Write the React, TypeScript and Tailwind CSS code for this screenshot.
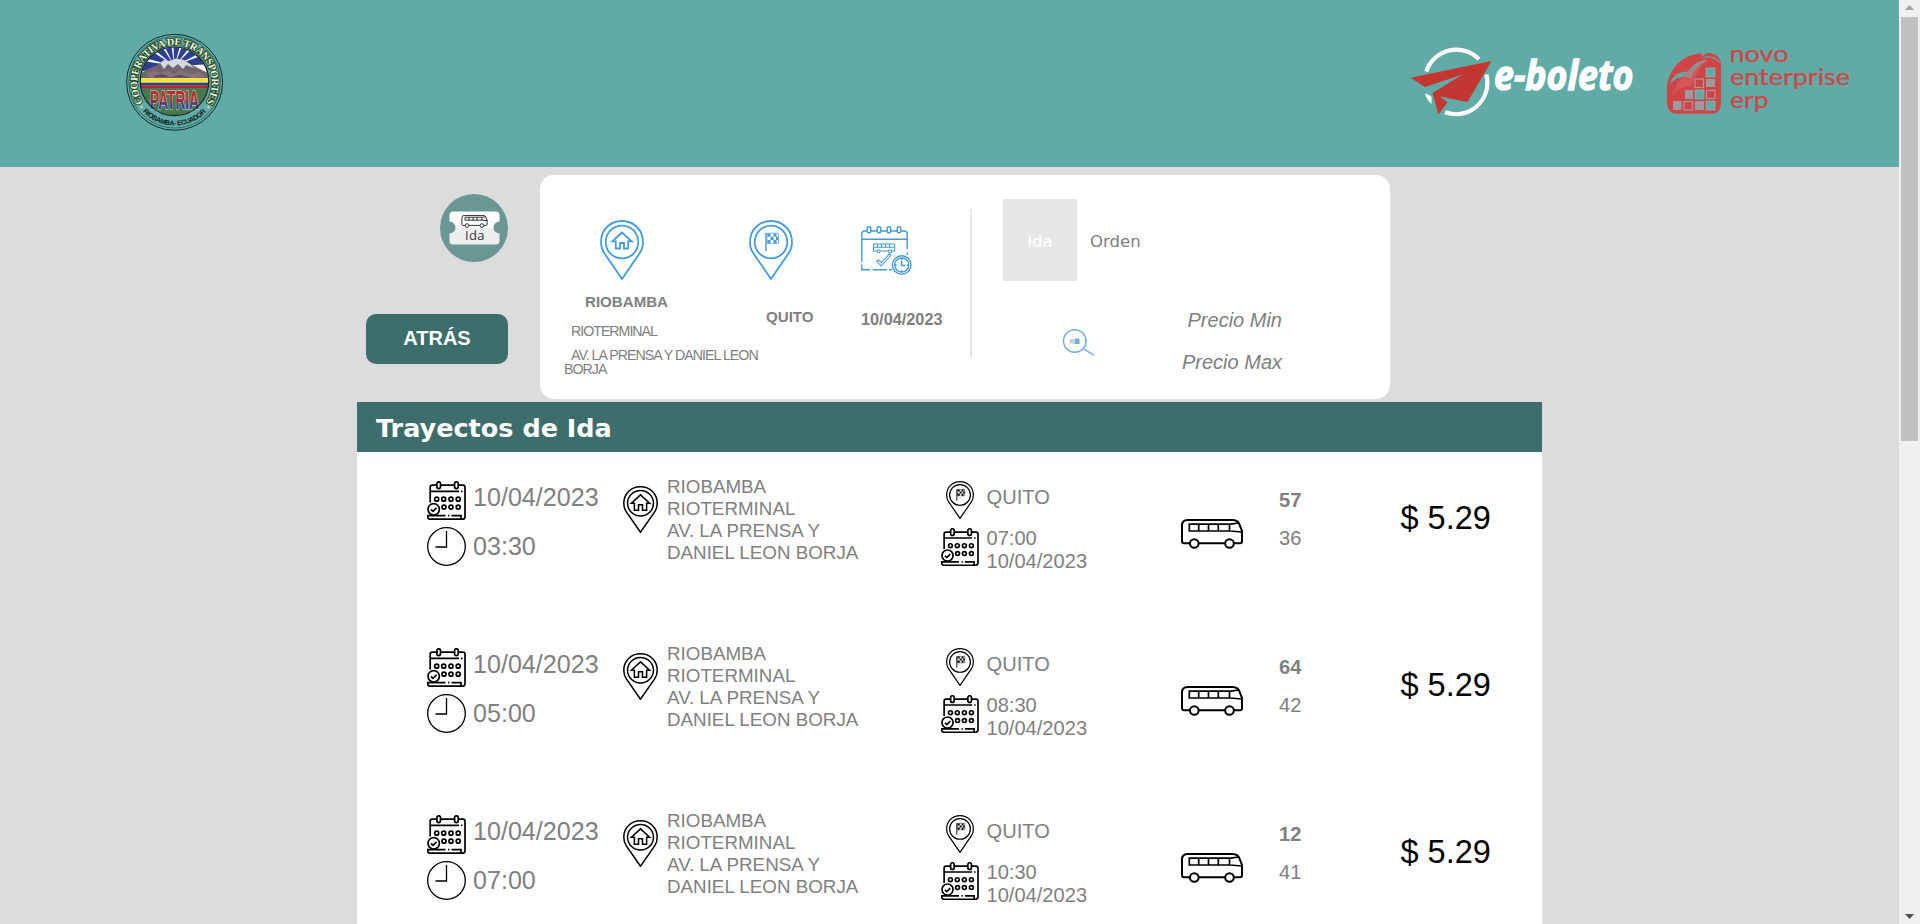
import React from "react";

const GREY = "text-[#808080]";

function PinIcon({ kind, className, sw }: { kind: "home" | "bighome" | "flag"; className: string; sw: number }) {
  return (
    <svg viewBox="0 0 44 60" className={className} fill="none" stroke="currentColor" strokeWidth={sw} preserveAspectRatio="none">
      <path d="M22 59 L4.2 33 C1.8 29.500 1 26 1 22 C1 10 10 1 22 1 C34 1 43 10 43 22 C43 26 42.200 29.500 39.800 33 Z" />
      <circle cx="22" cy="22" r="16.300" />
      {kind === "home" && (
        <path d="M22 12.500 L12.300 21.300 H15.800 V28.500 H20 V23 H24 V28.500 H28.200 V21.300 H31.700 Z" />
      )}
      {kind === "bighome" && (
        <path d="M22 11.300 L10.500 22 H14.300 V31 H19.500 V24 H24.500 V31 H29.700 V22 H33.500 Z" />
      )}
      {kind === "flag" && (
        <g stroke="none" fill="currentColor">
          <rect x="16.300" y="13" width="1.400" height="18" />
          <path d="M18.500 13.500h3v3.200h-3z M24.500 13.500h3v3.200h-3z M21.500 16.700h3v3.200h-3z M27 16.700h2.500v3.200H27z M18.500 19.900h3v3.200h-3z M24.500 19.900h3v3.200h-3z" />
          <path d="M18 13.200h11.500v10.200H18z" fill="none" stroke="currentColor" strokeWidth="0.700" />
        </g>
      )}
    </svg>
  );
}

function CalendarIcon({ className }: { className: string }) {
  return (
    <svg viewBox="0 0 39 39" className={className} fill="none" stroke="#000" strokeWidth="1.700" preserveAspectRatio="none">
      <path d="M3.200 21.500 V6 Q3.200 4.200 5.200 4.200 H9.800 M13.600 4.200 H27.500 M31.400 4.200 H35.800 Q38 4.200 38 6.400 V35.500 Q38 38.200 35.500 38.200 H3 Q.8 38.200 .8 36 V34.700 H18.500 M24.500 34.700 H34 V38" />
      <rect x="9.900" y=".8" width="3.600" height="6.800" rx="1.800" />
      <rect x="27.600" y=".8" width="3.600" height="6.800" rx="1.800" />
      <path d="M3.200 10.300 H32 M34 10.300 H35.500 M21 34.700 H22.300" />
      <circle cx="9.700" cy="18.200" r="2" />
      <circle cx="16.700" cy="18.200" r="2" />
      <circle cx="24" cy="18.200" r="2" />
      <circle cx="31.200" cy="18.200" r="2" />
      <circle cx="17" cy="26.200" r="2" />
      <circle cx="24" cy="26.200" r="2" />
      <circle cx="31.200" cy="26.200" r="2" />
      <circle cx="6.700" cy="28.300" r="5.700" />
      <path d="M4 28.500 L6 30.300 L9.500 26.800" />
    </svg>
  );
}

function ClockIcon({ className }: { className: string }) {
  return (
    <svg viewBox="0 0 39 39" className={className} fill="none" stroke="#000" strokeWidth="1.300">
      <circle cx="19.500" cy="19.500" r="18.800" />
      <path d="M19.500 4 V20 H8.500" />
    </svg>
  );
}

function BusIcon({ className, sw }: { className: string; sw: number }) {
  return (
    <svg viewBox="0 0 62 30" className={className} fill="none" stroke="#000" strokeWidth={sw} preserveAspectRatio="none">
      <path d="M9 24.200 H3 Q1 24.200 1 22 V6.500 Q1 1 6.500 1 H51 Q56.500 1 58 4.500 L61 12 V22.500 Q61 24.200 59 24.200 H53 M17.600 24.200 H44" />
      <path d="M57.500 4 L50 5.200 H8.300 V12 H49 L61 13 M17.700 5.200 V12 M27.500 5.200 V12 M37.300 5.200 V12 M48.500 5.200 V12" strokeWidth={sw * 0.85} />
      <circle cx="13.300" cy="24.500" r="4.300" />
      <circle cx="48.500" cy="24.500" r="4.300" />
    </svg>
  );
}

function TripCalendarIcon() {
  return (
    <svg viewBox="0 0 51 50" className="h-[50px] w-[51px]" fill="none" stroke="#459bd8" strokeWidth="1.400">
      <path d="M.8 36 V8 Q.8 5 4 5 H6 M10 5 H16 M20 5 H26 M30 5 H36 M40 5 H43 Q46.200 5 46.200 8 V23 M46.200 26.500 V29 M.8 38.500 V43.800 H9 M11.500 43.800 H26 M28 43.800 H31 M.8 13.300 H46" />
      <rect x="6.300" y=".7" width="3.500" height="6" rx="1.300" />
      <rect x="16.200" y=".7" width="3.500" height="6" rx="1.300" />
      <rect x="26.200" y=".7" width="3.500" height="6" rx="1.300" />
      <rect x="36.300" y=".7" width="3.500" height="6" rx="1.300" />
      <g strokeWidth="1.050">
        <path d="M12.500 18 H33.700 V25 H12.500 Z M12.500 21.300 H33.700 M16.500 18 V21.300 M20.500 18 V21.300 M24.500 18 V21.300 M28.500 18 V21.300" />
        <circle cx="17.500" cy="25.300" r="1.500" fill="#fff" />
        <circle cx="29" cy="25.300" r="1.500" fill="#fff" />
        <path d="M15.500 35.500 L17.500 34 L20.300 36.500 L28.500 27.800 L30 29.300 L20.300 39.800 Z" />
      </g>
      <circle cx="40.700" cy="39" r="9.300" fill="#fff" />
      <circle cx="40.700" cy="39" r="7" />
      <path d="M40.700 35 V39.500 H44 M40.700 32 V33.800 M40.700 44.200 V46 M33.700 39 H35.500 M46 39 H47.700" />
    </svg>
  );
}

function CoopEmblem() {
  const rays = [-90, -66, -42, -18, 6, 30, 54, 78];
  return (
    <svg viewBox="15 13 99 99" className="h-[99px] w-[99px] overflow-visible">
      <defs>
        <clipPath id="disc"><circle cx="64.500" cy="61.300" r="34" /></clipPath>
        <path id="arcTop" d="M33.100 82.500 A37.300 37.300 0 1 1 96.100 82.500" />
        <path id="arcBottom" d="M32.100 90.800 A43.200 43.200 0 0 0 97.100 90.800" />
        <linearGradient id="patria" x1="0" y1="0" x2="0" y2="1">
          <stop offset="0.450" stopColor="#c3262b" />
          <stop offset="0.750" stopColor="#27409a" />
        </linearGradient>
      </defs>
      <circle cx="64.600" cy="62.300" r="48" fill="none" stroke="#0d2a2a" strokeWidth="1" />
      <circle cx="64.600" cy="62.300" r="45.800" fill="none" stroke="#0d2a2a" strokeWidth=".5" />
      <g clipPath="url(#disc)">
        <rect x="30" y="26" width="70" height="72" fill="#f4f6fa" />
        {rays.map((a) => (
          <path key={a} d="M64.500 46 L57.500 2 H71.500 Z" fill="#2c3f92" transform={`rotate(${a} 64.500 46)`} />
        ))}
        <path d="M28 55 L38 49 L47 45 L54 40 L59 41 L66 38.500 L74 40 L82 45 L90 49 L100 54 V60 H28 Z" fill="#6f666e" />
        <path d="M50 43 L54 40 L59 41 L66 38.500 L74 40 L80 44 L84 48 L76 45 L73 49 L68 44 L63 48 L58 44 L54 49 Z" fill="#d6d7df" />
        <path d="M36 53 L45 50 L50 53 L57 50 L64 54 L71 50 L80 54 L90 52 L96 57 L84 58 H40 Z" fill="#857177" />
        <path d="M44 56 L52 54 L60 57 L70 55 L82 57.500 H44 Z" fill="#5a4e58" />
        <rect x="28" y="58" width="74" height="4.700" fill="#f4e33c" />
        <rect x="28" y="62.700" width="74" height="3" fill="#2c3f80" />
        <rect x="28" y="65.700" width="74" height="2.300" fill="#b8252b" />
        <rect x="28" y="68" width="74" height="30" fill="#47794d" />
      </g>
      <text transform="translate(64.500 88.500) scale(1 1.200)" textAnchor="middle" textLength="49" lengthAdjust="spacingAndGlyphs" fontSize="21" fontWeight="700" fontFamily="Liberation Sans, sans-serif" fill="url(#patria)" stroke="#e9dfe4" strokeWidth="1" paintOrder="stroke">PATRIA</text>
      <circle cx="64.500" cy="61.300" r="34.300" fill="none" stroke="#15201f" strokeWidth="1.200" />
      <text fontSize="10.200" fontWeight="700" fontFamily="Liberation Serif, serif" fill="#f4f7e6" stroke="#234a22" strokeWidth="2" paintOrder="stroke">
        <textPath href="#arcTop" textLength="159">COOPERATIVA DE TRANSPORTES</textPath>
      </text>
      <text fontSize="7" fontWeight="700" fontFamily="Liberation Sans, sans-serif" fill="#0a1f1f">
        <textPath href="#arcBottom" startOffset="1" textLength="71">RIOBAMBA- ECUADOR</textPath>
      </text>
      <circle cx="31.500" cy="87" r="1.400" fill="#c8d0b0" />
      <circle cx="98.500" cy="87" r="1.400" fill="#c8d0b0" />
    </svg>
  );
}

function BoletoLogo() {
  return (
    <svg viewBox="0 0 226 72" className="h-[72px] w-[226px] overflow-visible">
      <g fill="none" stroke="#fff" strokeWidth="4.200">
        <path d="M16.300 23.500 A31.500 31.500 0 0 1 69 11.300" />
        <path d="M76.300 26.500 A31.500 31.500 0 0 1 35 64.300" />
      </g>
      <path d="M14.800 45.500 Q18.500 46 21.500 48.800 V56 Q16.500 51.500 14.800 45.500 Z" fill="#fff" />
      <path d="M0.500 29.700 L81.500 13 L57.500 54 L30 48.500 L37.500 54.500 L28.500 66.500 L22.500 45 L52.500 26.500 L15 39 Z" fill="#c43632" />
      <text x="84" y="42" textLength="139.500" lengthAdjust="spacingAndGlyphs" fontFamily="Open Sans, sans-serif" fontStyle="italic" fontWeight="700" fontSize="41" fill="#fff" stroke="#fff" strokeWidth="1.300">e-boleto</text>
    </svg>
  );
}

function NovoLogo() {
  return (
    <svg viewBox="0 0 186 72" className="h-[72px] w-[186px] overflow-visible">
      <path d="M0 54 V40 C1 22 14 7 34 5.300 L36 8 L40 5 C47 4.500 53 8 54 15 V54 Q54 65.700 44 65.700 H10 Q0 65.700 0 54 Z" fill="#cf4547" />
      <path d="M3 36 C6 26 14 23 21 24 C26 16 33 12 40 12 C31 17 27 23 24 30 C16 27 9 29 3 36 Z" fill="#61aba6" />
      <path d="M5 49 C9 32 22 18 40 12 C30 22 27 31 24 39 C15 38 9 42 5 49 Z" fill="#d9696a" opacity=".5" />
      <path d="M36 9.500 Q47 7 53 15" fill="none" stroke="#61aba6" strokeWidth="1.200" />
      <g fill="#9c9c9e">
        <rect x="39" y="31" width="9" height="8" /><rect x="18" y="42" width="8" height="9" /><rect x="6" y="53" width="8.500" height="9" /><rect x="28" y="53" width="9" height="9" />
      </g>
      <g fill="#61aba6" stroke="#9bbdb8" strokeWidth=".6">
        <rect x="39" y="20" width="9" height="9" /><rect x="28" y="42" width="9" height="9" /><rect x="39" y="53" width="9" height="9" />
      </g>
      <g fill="none" stroke="#a8999a" strokeWidth="1.200">
        <rect x="28" y="31" width="8.500" height="8.500" /><rect x="39.500" y="42.500" width="8.500" height="8" /><rect x="17" y="53.500" width="8.500" height="8.500" />
      </g>
      <g fill="#d24446" stroke="#d24446" strokeWidth=".25" fontFamily="Lato, sans-serif" fontSize="23.500">
        <text x="62.500" y="13.500" textLength="59" lengthAdjust="spacingAndGlyphs">novo</text>
        <text x="63" y="36.500" textLength="120" lengthAdjust="spacingAndGlyphs">enterprise</text>
        <text x="63" y="59.500" textLength="38.500" lengthAdjust="spacingAndGlyphs">erp</text>
      </g>
    </svg>
  );
}

const trips = [
  { depart: "03:30", arrive: "07:00", bus: "57", seats: "36" },
  { depart: "05:00", arrive: "08:30", bus: "64", seats: "42" },
  { depart: "07:00", arrive: "10:30", bus: "12", seats: "41" },
];

function TripRow({ t }: { t: (typeof trips)[number] }) {
  return (
    <div className={`flex h-[167px] shrink-0 items-start whitespace-nowrap pl-[70px] ${GREY}`}>
      <div className="flex w-[46px] flex-col gap-[7px] pt-[29px]">
        <CalendarIcon className="h-[39px] w-[39px]" />
        <ClockIcon className="h-[39px] w-[39px]" />
      </div>
      <div className="w-[150px] pt-[29px] text-[25.100px]">
        <div className="leading-[33px]">10/04/2023</div>
        <div className="mt-[12px] leading-[40px]">{t.depart}</div>
      </div>
      <div className="w-[44px] pt-[34px]">
        <PinIcon kind="bighome" sw={1.9} className="h-[47px] w-[35px] text-black" />
      </div>
      <div className="w-[274px] pt-[24px] text-[18.800px] leading-[22px]">
        <div>RIOBAMBA</div>
        <div>RIOTERMINAL</div>
        <div>AV. LA PRENSA Y</div>
        <div>DANIEL LEON BORJA</div>
      </div>
      <div className="flex w-[45.500px] flex-col gap-[9px] pt-[29px]">
        <PinIcon kind="flag" sw={1.9} className="ml-[5px] h-[38px] w-[28px] text-black" />
        <CalendarIcon className="h-[38px] w-[38px]" />
      </div>
      <div className="w-[194.500px] pt-[34px] text-[20.100px] leading-[23px]">
        <div>QUITO</div>
        <div className="mt-[18px]">{t.arrive}</div>
        <div>10/04/2023</div>
      </div>
      <div className="w-[98px] pt-[67px]">
        <BusIcon sw={2} className="h-[30px] w-[62px]" />
      </div>
      <div className="w-[121.500px] pt-[37px] text-[20.100px] leading-[23px]">
        <div className="font-bold">{t.bus}</div>
        <div className="mt-[15px]">{t.seats}</div>
      </div>
      <div className="pt-[47px] text-[32.500px] leading-[38px] text-black">$ 5.29</div>
    </div>
  );
}

export default function App() {
  return (
    <div className="flex h-[924px] w-[1920px] overflow-hidden bg-[#dcdcdc] font-['Liberation_Sans',Arial,sans-serif]">
      <div className="flex w-[1899px] flex-col">
        <header className="flex h-[167px] shrink-0 items-start bg-[#61aba6] pl-[125px] pr-[46px]">
          <div className="pt-[33px]"><CoopEmblem /></div>
          <div className="ml-auto flex gap-[31.500px] pt-[48px]">
            <BoletoLogo />
            <NovoLogo />
          </div>
        </header>

        <div className="flex h-[235px] shrink-0 items-start">
          <div className="flex w-[508px] flex-col items-end pt-[27px]">
            <div className="flex h-[68px] w-[68px] items-center justify-center rounded-full bg-[#6a9694]">
              <svg viewBox="0 0 51 34" className="h-[34px] w-[51px]">
                <defs>
                  <linearGradient id="ticket" x1="0" y1="0" x2="0" y2="1">
                    <stop offset=".48" stopColor="#fff" />
                    <stop offset=".5" stopColor="#eeeeee" />
                  </linearGradient>
                </defs>
                <path d="M4 .5 H47 Q50.500 .5 50.500 4 V10.500 A6 6 0 0 0 50.500 22.500 V30 Q50.500 33.500 47 33.500 H4 Q.5 33.500 .5 30 V22.500 A6 6 0 0 0 .5 10.500 V4 Q.5 .5 4 .5 Z" fill="url(#ticket)" />
                <g transform="translate(12.500 4) scale(.42 .43)" fill="none" stroke="#222" strokeWidth="2.200">
                  <path d="M9 24.200 H3 Q1 24.200 1 22 V6.500 Q1 1 6.500 1 H51 Q56.500 1 58 4.500 L61 12 V22.500 Q61 24.200 59 24.200 H53 M17.600 24.200 H44" />
                  <path d="M57.500 4 L50 5.200 H8.300 V12 H49 L61 13 M17.700 5.200 V12 M27.500 5.200 V12 M37.300 5.200 V12 M48.500 5.200 V12" />
                  <circle cx="13.300" cy="24.500" r="4.300" />
                  <circle cx="48.500" cy="24.500" r="4.300" />
                </g>
                <text x="16" y="28.700" textLength="19.500" fontFamily="Open Sans, sans-serif" fontSize="13" fill="#33363f">Ida</text>
              </svg>
            </div>
            <button className="mt-[52px] h-[50px] w-[142px] rounded-[10px] bg-[#3d6e6c] pb-[3px] text-[20px] font-bold text-white">ATRÁS</button>
          </div>

          <section className={`ml-8 mt-2 flex h-[224px] w-[850px] items-start rounded-[14px] bg-white whitespace-nowrap ${GREY}`}>
            <div className="w-[209px] pl-[24px] pt-[45px]">
              <PinIcon kind="home" sw={1.8} className="ml-[36px] h-[60px] w-[44px] text-[#459bd8]" />
              <div className="ml-[21px] mt-[13px] text-[15.100px] font-bold leading-[17px]">RIOBAMBA</div>
              <div className="ml-[7px] mt-[13px] text-[14.200px] leading-[16px] tracking-[-1px]">RIOTERMINAL</div>
              <div className="mt-[9px] text-[14.200px] leading-[14px] tracking-[-0.960px]">
                <div className="pl-[7px]">AV. LA PRENSA Y DANIEL LEON</div>
                <div>BORJA</div>
              </div>
            </div>
            <div className="w-[112px] pt-[45px]">
              <PinIcon kind="flag" sw={1.8} className="h-[60px] w-[44px] text-[#459bd8]" />
              <div className="ml-[17px] mt-[28px] text-[15.100px] font-bold leading-[17px]">QUITO</div>
            </div>
            <div className="w-[109px] pt-[51px]">
              <TripCalendarIcon />
              <div className="mt-[34px] text-[16.300px] font-bold leading-[18px]">10/04/2023</div>
            </div>
            <div className="mt-[34px] h-[149px] w-[2px] bg-[#e5e5e5]" />
            <div className="ml-[31px] flex w-[279px] flex-col pt-[24px]">
              <div className="flex font-['DejaVu_Sans',sans-serif] text-[16.600px]">
                <div className="h-[82px] w-[74px] bg-[#e6e6e6] pt-[2px] text-center leading-[82px] text-white">Ida</div>
                <div className="ml-[13px] pt-[2px] leading-[82px]">Orden</div>
              </div>
              <div className="flex justify-between pt-[25px]">
                <svg viewBox="0 0 33 28" className="ml-[59px] mt-[20px] h-[28px] w-[33px]" fill="none">
                  <circle cx="12.800" cy="13" r="11.300" stroke="#6db0df" strokeWidth="1.400" />
                  <path d="M21 20.500 L32 27.200" stroke="#7db9e3" strokeWidth="1.600" />
                  <rect x="8" y="11" width="4" height="4.500" fill="#c8cdd0" />
                  <rect x="12.500" y="10.500" width="5" height="5.500" fill="#6fb5c9" />
                </svg>
                <div className="text-right text-[20px] italic leading-[24px]">
                  <div>Precio Min</div>
                  <div className="mt-[18px]">Precio Max</div>
                </div>
              </div>
            </div>
          </section>
        </div>

        <main className="ml-[357px] flex w-[1185px] flex-1 flex-col overflow-hidden bg-white">
          <h1 className="h-[50px] shrink-0 bg-[#3d6e6c] pl-[19px] pt-px font-['DejaVu_Sans',sans-serif] text-[25.500px] font-bold leading-[50px] text-white">
            Trayectos de Ida
          </h1>
          {trips.map((t) => (
            <TripRow key={t.bus} t={t} />
          ))}
        </main>
      </div>

      <div className="flex w-[21px] flex-col items-center bg-[#f0f0f0] pr-px">
        <svg viewBox="0 0 17 17" className="h-[17px] w-[17px] shrink-0"><path d="M4 10 L8.500 5 L13 10 Z" fill="#a3a3a3" /></svg>
        <div className="h-[424px] w-[17px] shrink-0 bg-[#c1c1c1]" />
        <svg viewBox="0 0 17 17" className="mt-auto h-[17px] w-[17px] shrink-0"><path d="M4 7 L8.500 12 L13 7 Z" fill="#505050" /></svg>
      </div>
    </div>
  );
}
